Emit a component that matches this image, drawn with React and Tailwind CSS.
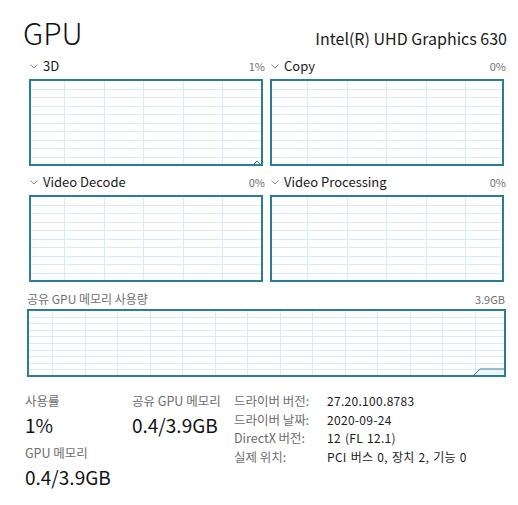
import React from 'react';

const BORDER = '#2a7d96';
const GRID = '#d9eaf2';

// Task-manager style graph: bordered box with a scrolling grid
const Graph = ({ width, height, rows, colStart, colStep, children }) => {
  const vLines = [];
  for (let x = colStart; x < width - 2; x += colStep) vLines.push(Math.round(x) + 0.5);
  const hLines = [];
  for (let i = 1; i < rows; i++) hLines.push(Math.round((i * (height - 2)) / rows) + 1.5);

  return (
    <svg width={width} height={height} className="block">
      {vLines.map((x) => (
        <line key={`v${x}`} x1={x} y1={1} x2={x} y2={height - 1} stroke={GRID} strokeWidth="1" />
      ))}
      {hLines.map((y) => (
        <line key={`h${y}`} x1={1} y1={y} x2={width - 1} y2={y} stroke={GRID} strokeWidth="1" />
      ))}
      {children}
      <rect x="1" y="1" width={width - 2} height={height - 2} fill="none" stroke={BORDER} strokeWidth="2" />
    </svg>
  );
};

const Chevron = () => (
  <svg width="8" height="5" viewBox="0 0 8 5" className="mr-[5px] shrink-0">
    <path d="M0.5 0.5 L4 4 L7.5 0.5" fill="none" stroke="#8a8a8a" strokeWidth="1" />
  </svg>
);

const EngineLabel = ({ name, value }) => (
  <div className="flex items-center h-[18px] mb-[4px] pl-[1px] -mr-[2px]">
    <Chevron />
    <span className="text-[13px] text-[#1a1a1a]">{name}</span>
    <span className="ml-auto text-[11px] text-[#707070]">{value}</span>
  </div>
);

const Engine = ({ name, value, colStart, children }) => (
  <div className="w-[234px]">
    <EngineLabel name={name} value={value} />
    <Graph width={234} height={87} rows={10} colStart={colStart} colStep={39.5}>
      {children}
    </Graph>
  </div>
);

const Stat = ({ label, value, className = '' }) => (
  <div className={className}>
    <div className="text-[12.5px] leading-[16px] text-[#6d6d6d]">{label}</div>
    <div className="mt-[4px] text-[19px] leading-[24px] text-[#111]">{value}</div>
  </div>
);

const info = [
  ['드라이버 버전:', '27.20.100.8783'],
  ['드라이버 날짜:', '2020-09-24'],
  ['DirectX 버전:', '12 (FL 12.1)'],
  ['실제 위치:', 'PCI 버스 0, 장치 2, 기능 0'],
];

export default function App() {
  return (
    <div className="w-[518px] h-[505px] bg-white overflow-hidden font-['Noto_Sans_CJK_KR','Noto_Sans',sans-serif]">
      <div className="flex items-baseline justify-between pt-[16px] pl-[23px] pr-[11px]">
        <span className="text-[30px] leading-[32px] font-light text-[#111]">GPU</span>
        <span className="text-[16px] text-[#1a1a1a]">Intel(R) UHD Graphics 630</span>
      </div>

      <div className="pl-[29px] mt-[7px]">
        <div className="flex gap-[7px]">
          <Engine name="3D" value="1%" colStart={35}>
            <polyline points="225,85 228,82 231,85" fill="none" stroke={BORDER} strokeWidth="1" />
          </Engine>
          <Engine name="Copy" value="0%" colStart={37} />
        </div>
        <div className="flex gap-[7px] mt-[7px]">
          <Engine name="Video Decode" value="0%" colStart={35} />
          <Engine name="Video Processing" value="0%" colStart={37} />
        </div>
      </div>

      <div className="pl-[27px] mt-[9px]">
        <div className="flex items-center h-[16px] mb-[2px] text-[#707070] pr-[13px]">
          <span className="text-[12px]">공유 GPU 메모리 사용량</span>
          <span className="ml-auto text-[11px]">3.9GB</span>
        </div>
        <Graph width={479} height={68} rows={10} colStart={25} colStep={32.5}>
          <polygon points="447,66 453,60 477,60 477,66" fill="#eef6f9" />
          <polyline points="447,66 453,60 477,60" fill="none" stroke={BORDER} strokeWidth="1" />
        </Graph>
      </div>

      <div className="flex items-start mt-[12px]">
        <div className="pl-[25px] w-[132px] pt-[4px]">
          <Stat label="사용률" value="1%" />
          <Stat label="GPU 메모리" value="0.4/3.9GB" className="mt-[8px]" />
        </div>
        <div className="w-[102px] pt-[4px]">
          <Stat label="공유 GPU 메모리" value="0.4/3.9GB" />
        </div>
        <div className="grid grid-cols-[93px_auto] content-start pt-[3px] text-[12px] leading-[18.7px]">
          {info.map(([k, v]) => (
            <React.Fragment key={k}>
              <span className="text-[12.5px] text-[#6d6d6d]">{k}</span>
              <span className="text-[#1a1a1a] tracking-[0.3px] [word-spacing:1px]">{v}</span>
            </React.Fragment>
          ))}
        </div>
      </div>
    </div>
  );
}
